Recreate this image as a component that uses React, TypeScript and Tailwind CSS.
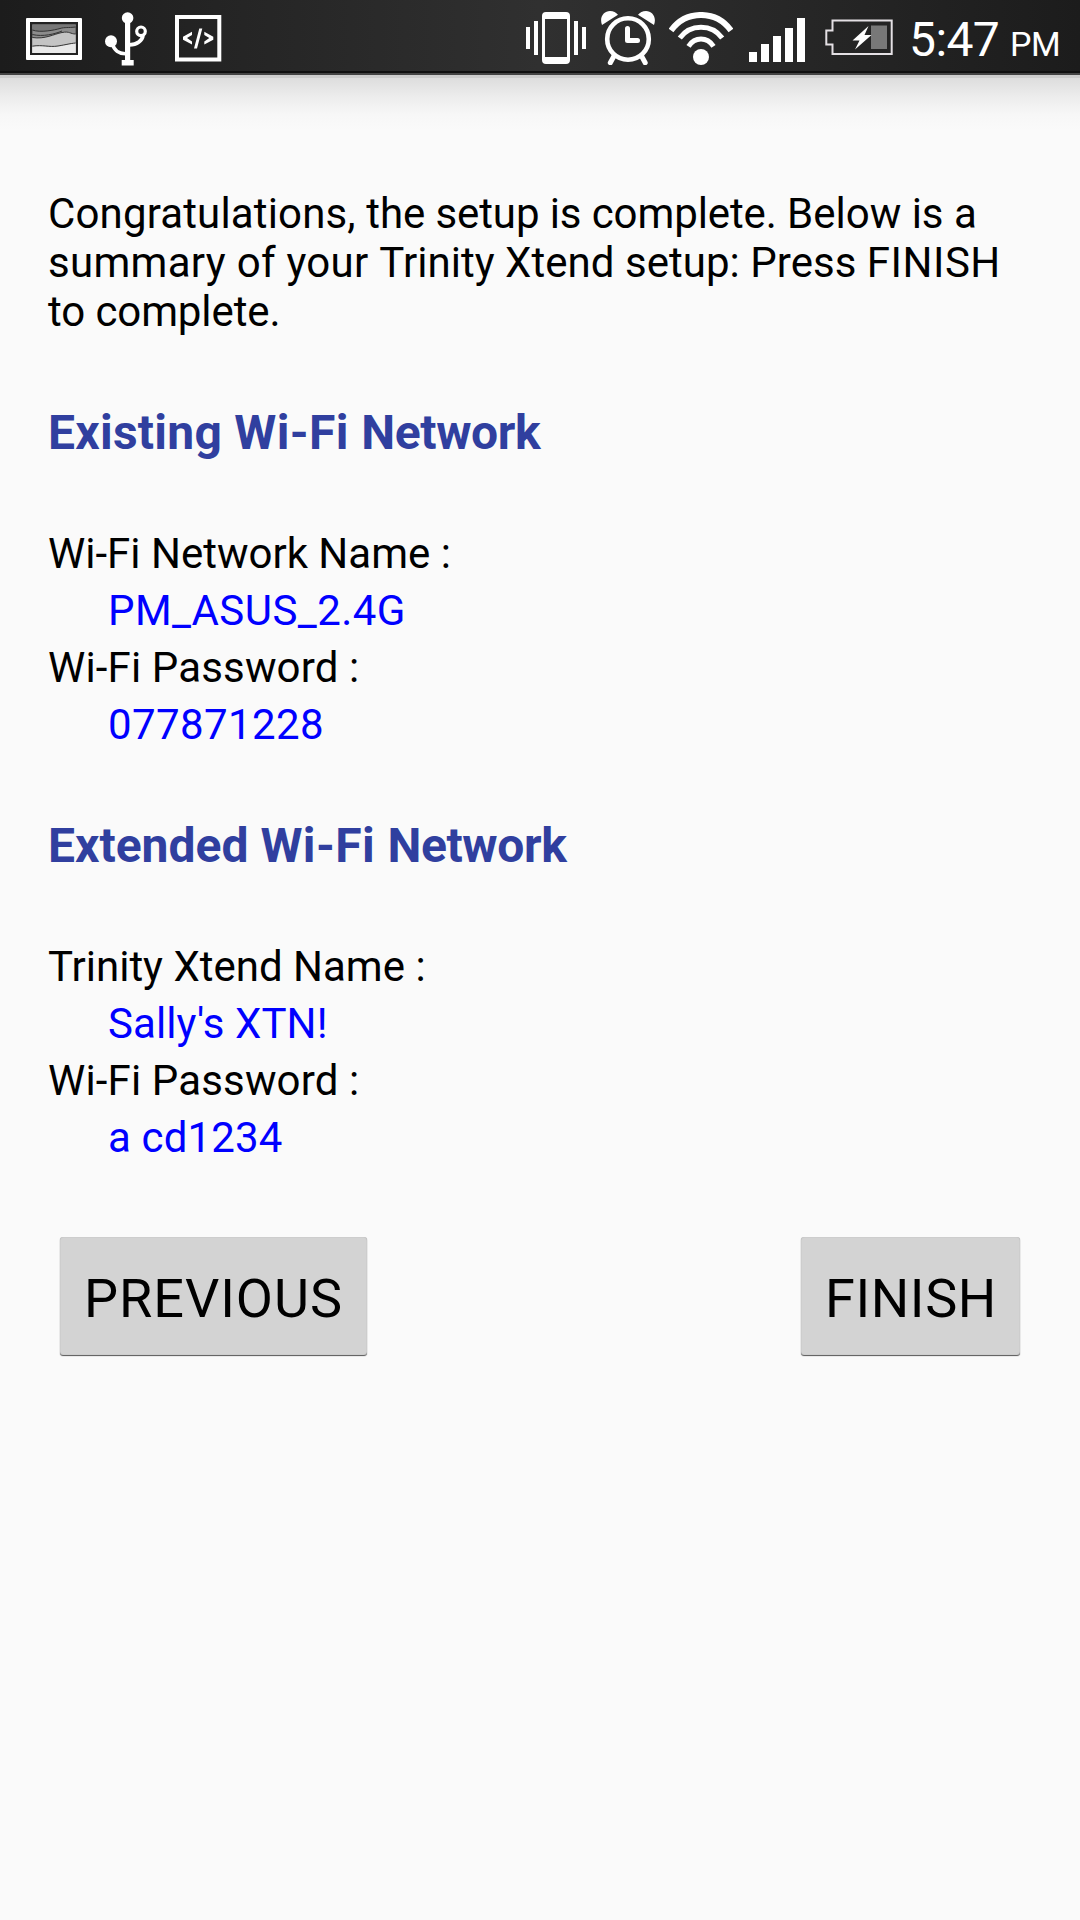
import type { ReactNode } from "react";

function PictureIcon() {
  return (
    <svg className="shrink-0" width="56" height="42" viewBox="26 18 56 42">
      <rect x="26" y="18" width="56" height="42" rx="1" fill="#fff" />
      <rect x="30" y="22" width="48" height="33" fill="#222" />
      <rect x="32.3" y="24.5" width="43.4" height="28.5" fill="#8c8c8c" />
      <path d="M32.3 30C40 33 55 30 60 28.5S68 28 75.7 27V24.5H32.3Z" fill="#777" />
      <path d="M32.3 37.5C45 39.5 54 34 62 32.5S70 34 75.7 34V53H32.3Z" fill="#c4c4c4" />
      <path d="M32.3 46.2C43 44.5 49 47.5 58 46S70 43.5 75.7 43V53H32.3Z" fill="#e9e9e9" />
      <path
        d="M32.3 30C40 33 55 30 60 28.5S68 28 75.7 27M32.3 34.5C43 37 55 34 62 31M32.3 37.5C45 39.5 54 34 62 32.5S70 34 75.7 34M32.3 46.2C43 44.5 49 47.5 58 46S70 43.5 75.7 43"
        fill="none"
        stroke="#333"
        strokeWidth="1"
      />
    </svg>
  );
}

function UsbIcon() {
  return (
    <svg className="ml-[23px] shrink-0" width="42" height="54" viewBox="105 12 42 54">
      <circle cx="127.6" cy="18" r="5.8" fill="#fff" />
      <rect x="125" y="18" width="5.2" height="45" fill="#fff" />
      <rect x="121.7" y="60" width="12" height="5.5" fill="#fff" />
      <circle cx="111" cy="41.3" r="6" fill="#fff" />
      <path d="M112.5 44C114 50 119 54 126 53.7" fill="none" stroke="#fff" strokeWidth="3.6" />
      <circle cx="141" cy="31.3" r="4.3" fill="none" stroke="#fff" strokeWidth="3.2" />
      <path d="M143 35C142.5 40.5 137 44.8 129.5 44.8" fill="none" stroke="#fff" strokeWidth="3.8" />
    </svg>
  );
}

function CodeIcon() {
  return (
    <svg className="mb-[2px] ml-[28px] shrink-0" width="47" height="47" viewBox="175 14.5 47 47">
      <rect x="177" y="16.5" width="42.3" height="42.5" fill="none" stroke="#fff" strokeWidth="4" />
      <path
        d="M183 36.3L192 31.3V34.5L187 37.6L192 41V44L183 39.2ZM213.3 36.3L204.3 31.3V34.5L209.3 37.6L204.3 41V44L213.3 39.2ZM199.3 28H202.3L197 48H194Z"
        fill="#fff"
      />
    </svg>
  );
}

function VibrateIcon() {
  return (
    <svg className="shrink-0" width="60" height="52" viewBox="526 12 60 52">
      <path fill="#fff" d="M526 27h4v22h-4zM534 21h4v34h-4zM574 21h4v34h-4zM582 27h4v22h-4z" />
      <path
        fill="#fff"
        fillRule="evenodd"
        d="M546 12h20q4 0 4 4v44q0 4-4 4h-20q-4 0-4-4v-44q0-4 4-4zM545 19v38h22v-38z"
      />
    </svg>
  );
}

function AlarmIcon() {
  return (
    <svg className="ml-[15px] shrink-0" width="54" height="54" viewBox="601 11 54 54">
      <circle cx="628" cy="39" r="20.8" fill="none" stroke="#fff" strokeWidth="4.6" />
      <path
        d="M602 25C599 17 604 11 610 11C613.5 11 616 12.5 618 14.7ZM654 25C657 17 652 11 646 11C642.5 11 640 12.5 638 14.7Z"
        fill="#fff"
      />
      <path d="M627.5 28.5V40.5H637.5" fill="none" stroke="#fff" strokeWidth="5" strokeLinecap="round" strokeLinejoin="round" />
      <path d="M614 56L610.3 62.7M641.5 56L645.2 62.7" stroke="#fff" strokeWidth="5" strokeLinecap="round" />
    </svg>
  );
}

function WifiIcon() {
  return (
    <svg className="ml-[14px] shrink-0" width="64" height="53" viewBox="669 11 64 53">
      <g fill="none" stroke="#fff" strokeWidth="5">
        <path d="M671 29.5C686 8.8 716 8.8 731 29.5" strokeWidth="6" />
        <path d="M679.8 37C690 22.5 712 22.5 722.2 37" />
        <path d="M688.5 45.3C695 35.7 707 35.7 713.5 45.3" />
      </g>
      <circle cx="701" cy="56" r="8" fill="#fff" />
    </svg>
  );
}

function SignalIcon() {
  return (
    <svg className="ml-[16px] shrink-0" width="56" height="44" viewBox="749 18 56 44">
      <path fill="#fff" d="M749 52h8v10h-8zM761 44h8v18h-8zM773 36h8v26h-8zM785 28h8v34h-8zM797 18h8v44h-8z" />
    </svg>
  );
}

function BatteryIcon() {
  return (
    <svg className="mt-px ml-[20px] shrink-0" width="68" height="36" viewBox="825 19 68 36">
      <rect x="871" y="25.5" width="16" height="23.5" fill="#787878" />
      <path d="M832.5 20.5H891.7V54H832.5V44.5H826.3V30.5H832.5Z" fill="none" stroke="#e4e0e4" strokeWidth="2" />
      <path d="M868.5 26L852.5 40.5H859.5L855 49.5L871.5 35H864.5Z" fill="#fff" />
    </svg>
  );
}

function StatusBar() {
  return (
    <header className="flex h-[75px] items-start justify-between border-b-2 border-[#444] bg-[#262626] bg-[linear-gradient(90deg,#1c1c1c,#303030_50%,#1c1c1c)] pl-[26px] shadow-[inset_0_-2px_0_#101010]">
      <div className="flex h-[78px] items-center">
        <PictureIcon />
        <UsbIcon />
        <CodeIcon />
      </div>
      <div className="flex h-[76px] w-[554px] items-center">
        <VibrateIcon />
        <AlarmIcon />
        <WifiIcon />
        <div className="flex pt-[4px]">
          <SignalIcon />
          <BatteryIcon />
        </div>
        <div className="ml-[16px] flex items-baseline pt-[5px] whitespace-nowrap text-white">
          <span className="w-[101px] text-[48px] leading-[56px] tracking-[-0.6px]">5:47</span>
          <span className="text-[34px] tracking-[-0.5px]">PM</span>
        </div>
      </div>
    </header>
  );
}

function Heading({ children }: { children: ReactNode }) {
  return <h2 className="text-[48px] leading-[56px] font-bold text-[#303f9f]">{children}</h2>;
}

type Field = { label: string; value: string; labelClass?: string; valueClass?: string };

function Fields({ items }: { items: Field[] }) {
  return (
    <dl className="leading-[57px]">
      {items.map(({ label, value, labelClass = "", valueClass = "" }) => (
        <div key={label}>
          <dt className={labelClass}>{label}</dt>
          <dd className={`ml-[60px] text-[#0000ff] ${valueClass}`}>{value}</dd>
        </div>
      ))}
    </dl>
  );
}

function Button({ className, children }: { className: string; children: ReactNode }) {
  return (
    <button
      className={`h-[118px] rounded-[3px] bg-[#d3d3d3] pt-[4px] pl-[24px] text-left text-[54px] leading-[63px] whitespace-nowrap shadow-[inset_0_0_1px_#999,0_1px_1px_#555] ${className}`}
    >
      {children}
    </button>
  );
}

const existing: Field[] = [
  { label: "Wi-Fi Network Name :", value: "PM_ASUS_2.4G", valueClass: "tracking-[0.45px]" },
  { label: "Wi-Fi Password :", value: "077871228", labelClass: "tracking-[0.15px]", valueClass: "tracking-[0.4px]" },
];

const extended: Field[] = [
  { label: "Trinity Xtend Name :", value: "Sally's XTN!", valueClass: "tracking-[0.1px]" },
  { label: "Wi-Fi Password :", value: "a cd1234", labelClass: "tracking-[0.15px]", valueClass: "tracking-[0.15px]" },
];

export default function App() {
  return (
    <div className="flex h-[1920px] w-[1080px] flex-col overflow-hidden bg-[#fafafa] font-['Roboto',sans-serif] text-[42px] text-black">
      <StatusBar />
      <div className="h-[55px] border-t-[3px] border-[#cdcdcd] bg-[linear-gradient(#dddddd,#ececec_35%,#f7f7f7_70%,#fafafa)]" />
      <main className="flex flex-col px-[48px] pt-[59px]">
        <p className="leading-[49px] whitespace-nowrap">
          <span className="tracking-[0.15px]">Congratulations, </span>
          <span className="tracking-[-0.1px]">the setup is complete. </span>
          Below is a<br />
          <span className="tracking-[0.3px]">summary of your </span>
          <span className="tracking-[0.04px]">Trinity Xtend setup: Press </span>
          <span className="tracking-[0.5px]">FINISH</span>
          <br />
          <span className="tracking-[-0.1px]">to complete.</span>
        </p>
        <div className="mt-[69px]">
          <Heading>
            <span className="tracking-[0.25px]">Existing </span>
            <span className="tracking-[0.4px]">Wi-Fi </span>
            <span className="tracking-[-0.35px]">Network</span>
          </Heading>
        </div>
        <div className="mt-[64px]">
          <Fields items={existing} />
        </div>
        <div className="mt-[65px]">
          <Heading>
            Extended <span className="tracking-[0.4px]">Wi-Fi </span>
            <span className="tracking-[-0.35px]">Network</span>
          </Heading>
        </div>
        <div className="mt-[64px]">
          <Fields items={extended} />
        </div>
        <div className="mt-[71px] flex justify-between px-[12px]">
          <Button className="w-[307px] tracking-[0.95px]">PREVIOUS</Button>
          <Button className="w-[219px] tracking-[0.6px]">FINISH</Button>
        </div>
      </main>
    </div>
  );
}
